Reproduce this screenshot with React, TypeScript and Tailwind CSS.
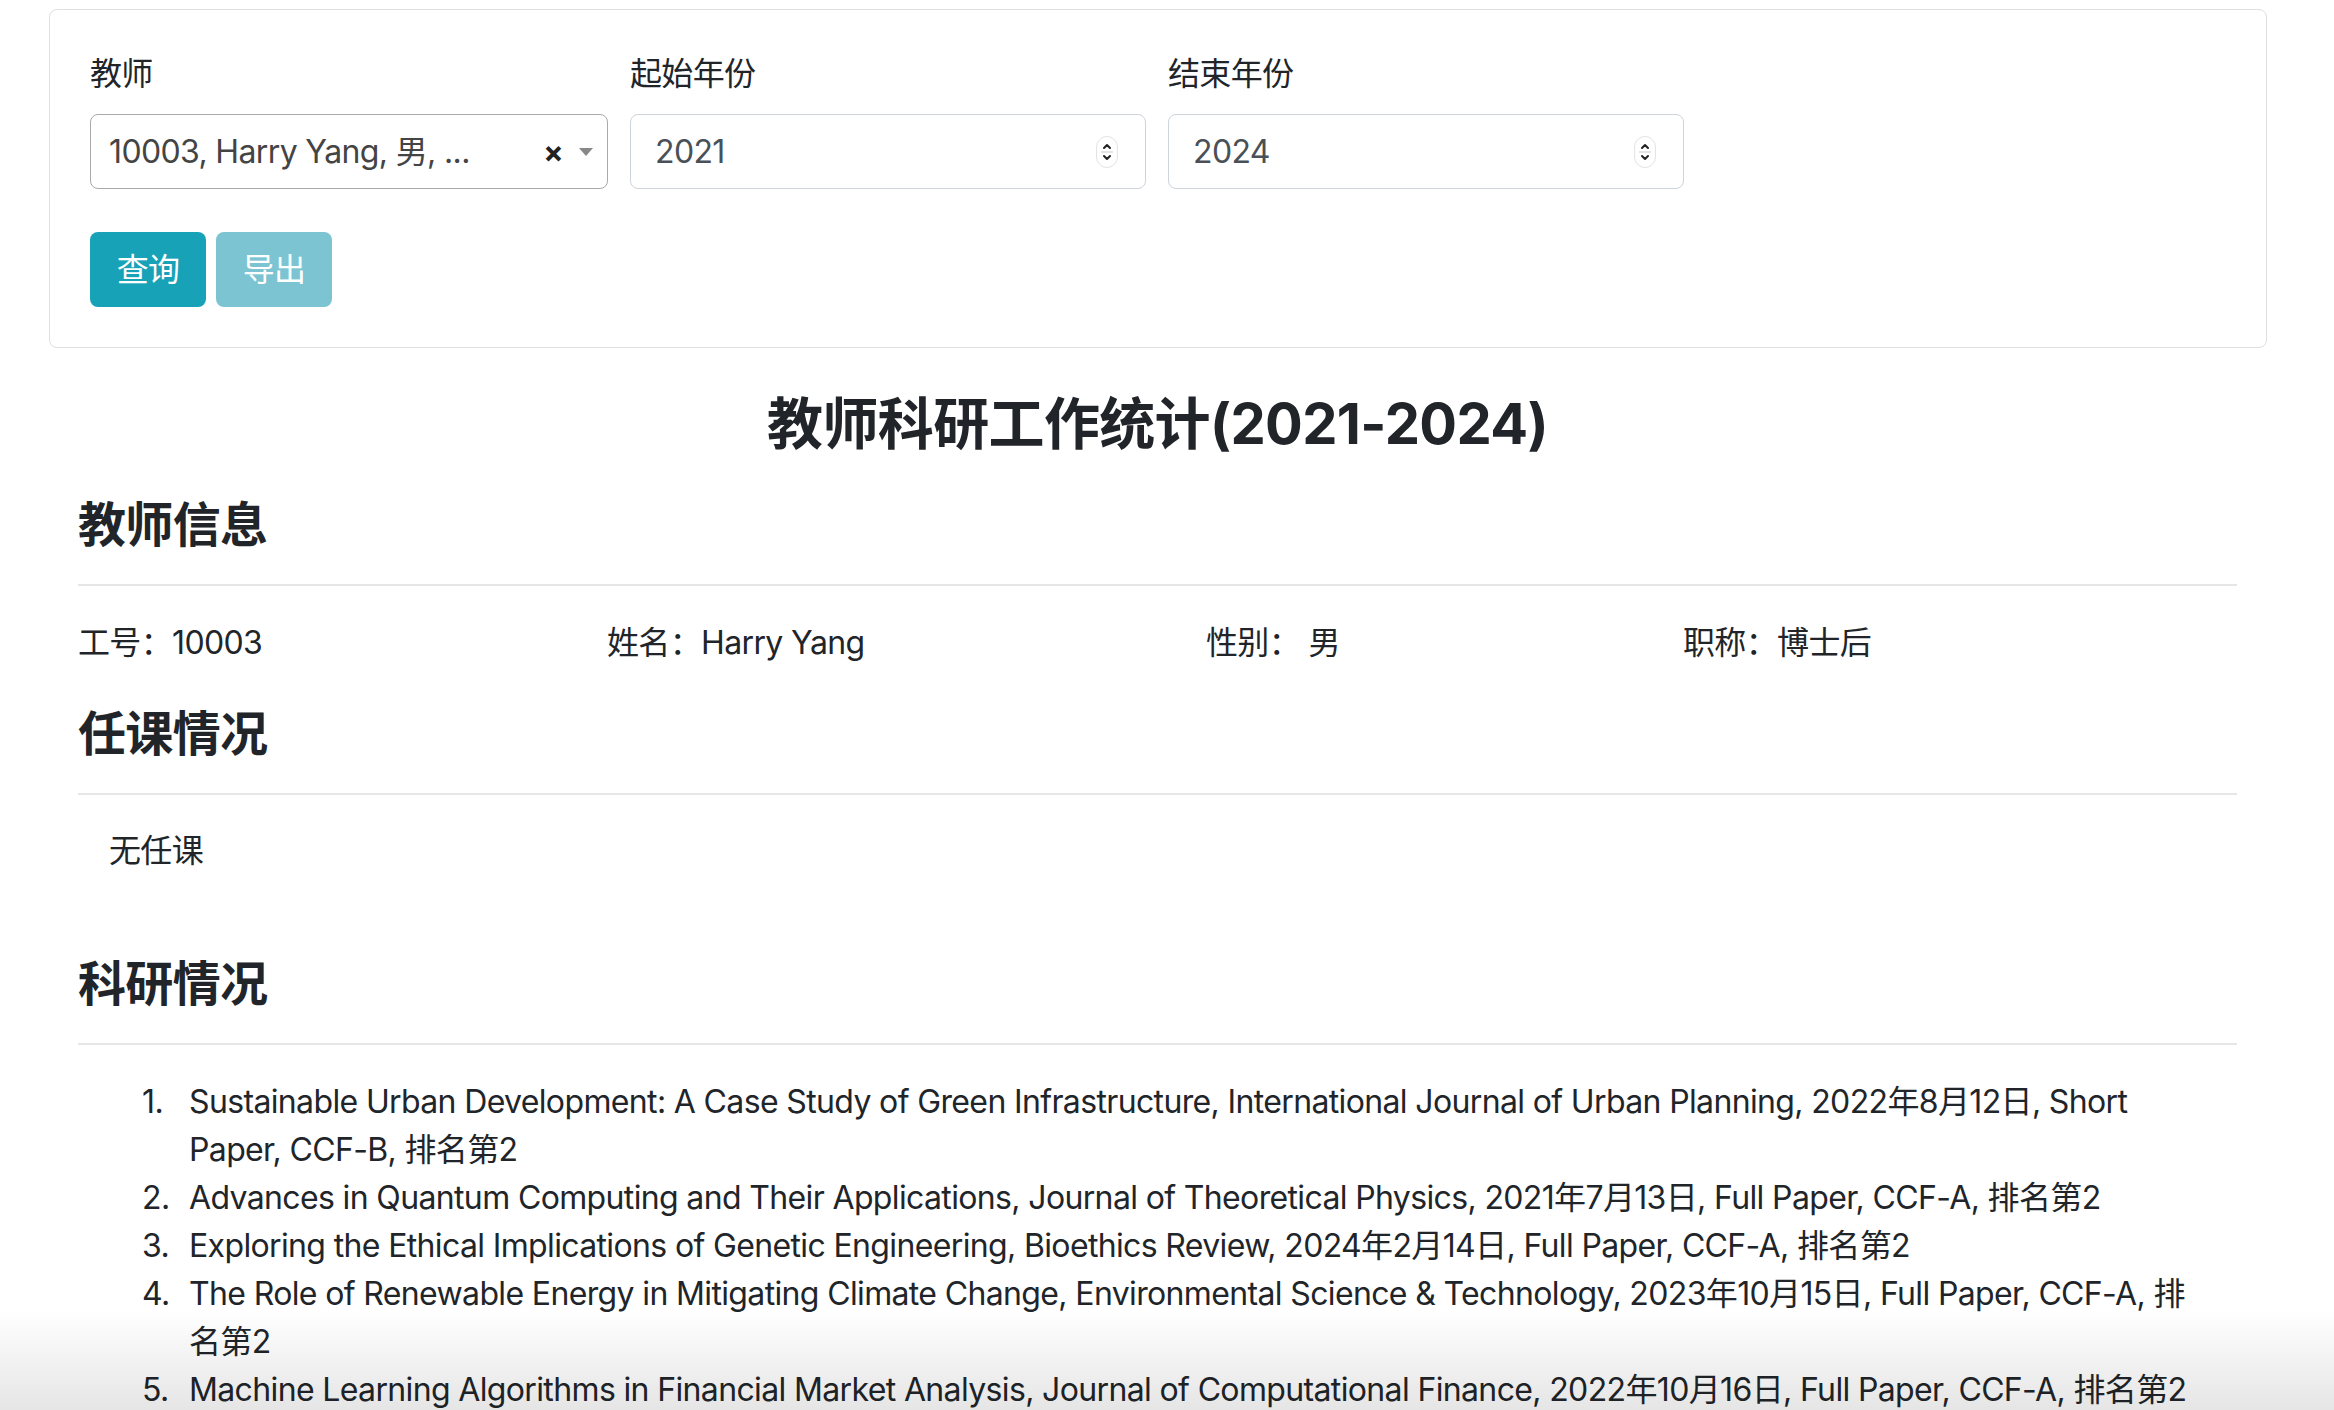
const papers = [
	"Sustainable Urban Development: A Case Study of Green Infrastructure, International Journal of Urban Planning, 2022年8月12日, Short Paper, CCF-B, 排名第2",
	"Advances in Quantum Computing and Their Applications, Journal of Theoretical Physics, 2021年7月13日, Full Paper, CCF-A, 排名第2",
	"Exploring the Ethical Implications of Genetic Engineering, Bioethics Review, 2024年2月14日, Full Paper, CCF-A, 排名第2",
	"The Role of Renewable Energy in Mitigating Climate Change, Environmental Science & Technology, 2023年10月15日, Full Paper, CCF-A, 排名第2",
	"Machine Learning Algorithms in Financial Market Analysis, Journal of Computational Finance, 2022年10月16日, Full Paper, CCF-A, 排名第2",
];

const Spinner = () => (
	<div className="flex h-[32px] w-[22px] flex-col items-center justify-center rounded-full border border-[#e3e3e3] bg-white">
		<svg width="12" height="28" viewBox="0 0 12 28" fill="none" stroke="#222" strokeWidth="2" strokeLinecap="round" strokeLinejoin="round">
			<path d="M3 10 L6 7 L9 10" />
			<line x1="0" y1="14" x2="12" y2="14" stroke="#dcdcdc" strokeWidth="1.5" />
			<path d="M3 18 L6 21 L9 18" />
		</svg>
	</div>
);

const YearInput = ({ label, value }: { label: string; value: string }) => (
	<div className="flex w-[516px] flex-col">
		<label className="mb-[16px] leading-[48px]">{label}</label>
		<div className="flex h-[75px] items-center justify-between rounded-[8px] border border-[#ced4da] bg-white pl-[24px] pr-[27px] text-[#495057]">
			<span>{value}</span>
			<Spinner />
		</div>
	</div>
);

const Section = ({ title, children }: { title: string; children: React.ReactNode }) => (
	<div>
		<h4 className="text-[48px] font-bold leading-[58px]">{title}</h4>
		<div className="mt-[30px] h-[2px] bg-[#e6e6e6]" />
		{children}
	</div>
);

const App = () => {
	return (
		<div className="relative min-h-screen bg-white pb-[20px] font-['Inter','Noto_Sans_CJK_SC',sans-serif] text-[32px] leading-[48px] tracking-[-0.02em] text-[#212529]">
			{/* filter card */}
			<div className="ml-[49px] mt-[9px] w-[2218px] rounded-[8px] border border-[#dfdfdf] px-[40px] py-[40px]">
				<div className="flex gap-[22px]">
					<div className="flex w-[518px] flex-col">
						<label className="mb-[16px] leading-[48px]">教师</label>
						<div className="flex h-[75px] items-center rounded-[8px] border border-[#aaaaaa] bg-white pl-[18px] pr-[14px] text-[#444444]">
							<span className="flex-1">10003, Harry Yang, 男, ...</span>
							<span className="mr-[16px] text-[30px] font-bold leading-none text-[#222]">×</span>
							<svg width="14" height="8" viewBox="0 0 14 8">
								<path d="M0 0 L14 0 L7 8 Z" fill="#888" />
							</svg>
						</div>
					</div>
					<YearInput label="起始年份" value="2021" />
					<YearInput label="结束年份" value="2024" />
				</div>
				<div className="mt-[43px] flex gap-[10px]">
					<button className="h-[75px] w-[116px] rounded-[8px] bg-[#17a2b8] text-white">查询</button>
					<button className="h-[75px] w-[116px] rounded-[8px] bg-[#7cc4d1] text-white">导出</button>
				</div>
			</div>

			{/* report */}
			<div className="ml-[78px] w-[2159px]">
				<h3 className="mt-[43px] text-center text-[56px] font-bold leading-[67px]">教师科研工作统计(2021-2024)</h3>

				<div className="mt-[38px]">
					<Section title="教师信息">
						<div className="mt-[33px] flex">
							<div className="w-[529px]">工号：10003</div>
							<div className="w-[599px]">姓名：Harry Yang</div>
							<div className="w-[477px]">性别： 男</div>
							<div>职称：博士后</div>
						</div>
					</Section>
				</div>

				<div className="mt-[38px]">
					<Section title="任课情况">
						<p className="mt-[32px] pl-[31px]">无任课</p>
					</Section>
				</div>

				<div className="mt-[80px]">
					<Section title="科研情况">
						<ol className="mt-[33px] flex flex-col pl-[64px] pr-[38px]">
							{papers.map((p, i) => (
								<li key={p} className="flex">
									<span className="w-[47px] shrink-0">{i + 1}.</span>
									<span>{p}</span>
								</li>
							))}
						</ol>
					</Section>
				</div>
			</div>

			<div className="pointer-events-none fixed inset-x-0 bottom-0 h-[100px] bg-linear-to-b from-transparent to-black/10" />
		</div>
	);
};

export default App;
